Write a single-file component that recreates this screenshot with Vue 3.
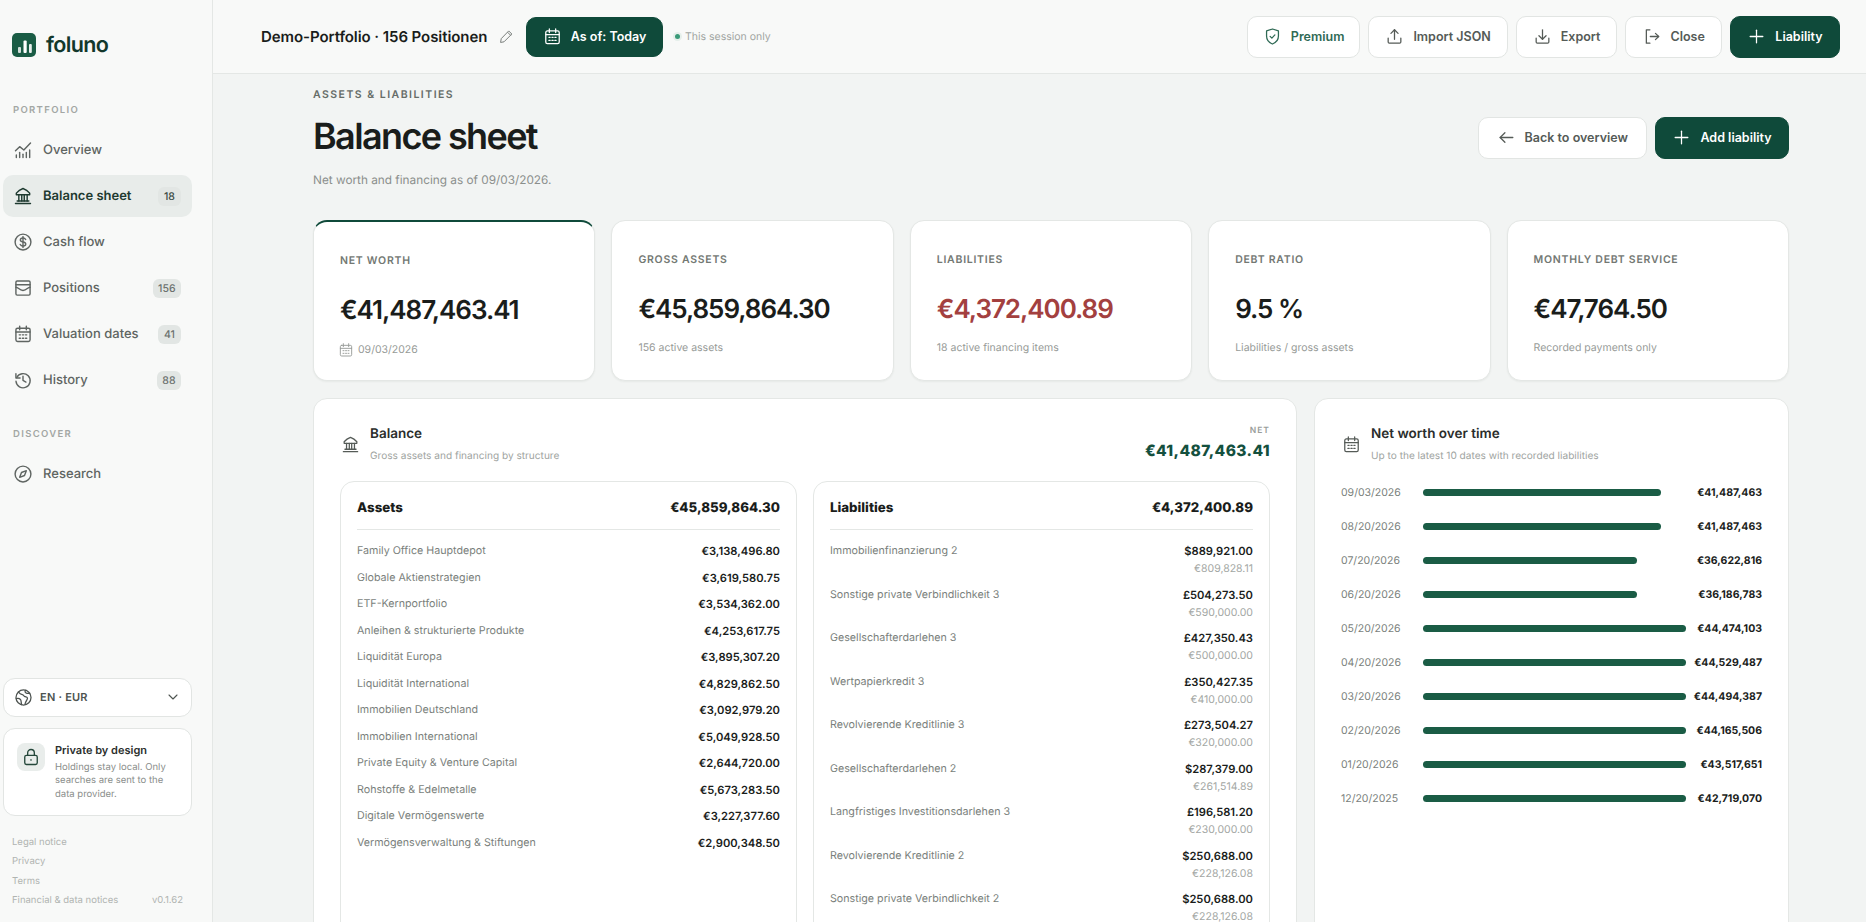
<script setup>
const icons = {
  overview: ['M4 21v-3', 'M8 21v-6', 'M12 21v-4', 'M16 21v-6', 'M20 21v-9', 'M3 13l5-5 5 4 8-8.5'],
  bank: ['M3 21h18', 'M5 18h14', 'M7 10.5V18', 'M10.5 10.5V18', 'M13.5 10.5V18', 'M17 10.5V18', 'M4 10.5h16V8.5C17.5 5.5 15 4 12 3 9 4 6.5 5.5 4 8.5z'],
  dollar: ['M21.5 12a9.5 9.5 0 1 1-19 0 9.5 9.5 0 0 1 19 0z', 'M15.2 9c-.6-1.2-1.7-1.8-3.2-1.8-1.9 0-3.2 1-3.2 2.4S10 11.7 12 12s3.3 1 3.3 2.4-1.4 2.4-3.3 2.4c-1.5 0-2.7-.6-3.3-1.8', 'M12 5.5v13'],
  tray: ['M5 3.5h14A1.5 1.5 0 0 1 20.5 5v14a1.5 1.5 0 0 1-1.5 1.5H5A1.5 1.5 0 0 1 3.5 19V5A1.5 1.5 0 0 1 5 3.5z', 'M3.5 8h17', 'M3.5 11c3 0 4 4 8.5 4s5.5-4 8.5-4'],
  calendar: ['M5.5 5h13a2 2 0 0 1 2 2v12a2 2 0 0 1-2 2h-13a2 2 0 0 1-2-2V7a2 2 0 0 1 2-2z', 'M8 2.5V7', 'M16 2.5V7', 'M3.5 9.5h17', 'M7.5 13H9', 'M11.3 13h1.5', 'M15 13h1.5', 'M7.5 17H9', 'M11.3 17h1.5', 'M15 17h1.5'],
  history: ['M4.5 9a8.5 8.5 0 1 1-.9 4.5', 'M3.5 4.5v5h5', 'M12 7.5v5l3.5 2'],
  compass: ['M21.5 12a9.5 9.5 0 1 1-19 0 9.5 9.5 0 0 1 19 0z', 'M16 8l-2.2 5.8L8 16l2.2-5.8z'],
  globe: ['M21.5 12a9.5 9.5 0 1 1-19 0 9.5 9.5 0 0 1 19 0z', 'M5.5 5c1.5 2 3 3 5 3.5s2 2 3.5 2.5 3 0 3 2-2 3-3 7', 'M2.8 13.5c2.5-1 4-.5 5.3 1 1.2 1.5.9 3.5 1.4 6.5', 'M14.5 3c-1 1.8-.5 3 1 3.5s3 .5 4.5 0'],
  lock: ['M6.5 10h11a2 2 0 0 1 2 2v7a2 2 0 0 1-2 2h-11a2 2 0 0 1-2-2v-7a2 2 0 0 1 2-2z', 'M8 10V7a4 4 0 0 1 8 0v3', 'M12 15.2v.6'],
  shield: ['M12 2.5 4.5 5v6.5c0 5 3.5 8.5 7.5 10 4-1.5 7.5-5 7.5-10V5z', 'M9 11.8l2.2 2.2 3.8-4'],
  upload: ['M12 15.5v-12', 'M7.5 8 12 3.5 16.5 8', 'M4 14v5a1.5 1.5 0 0 0 1.5 1.5h13A1.5 1.5 0 0 0 20 19v-5'],
  download: ['M12 3.5v12', 'M7.5 11l4.5 4.5 4.5-4.5', 'M4 14v5a1.5 1.5 0 0 0 1.5 1.5h13A1.5 1.5 0 0 0 20 19v-5'],
  exit: ['M10 3.5H5.5v17H10', 'M10.5 12H21', 'M17 8l4 4-4 4'],
  plus: ['M12 4v16', 'M4 12h16'],
  back: ['M20 12H4', 'M10 6l-6 6 6 6'],
  pencil: ['M16 3.5 20.5 8 8 20.5l-5.5 1 1-5.5z', 'M14 5.5 18.5 10'],
  chevron: ['M6 9l6 6 6-6']
}

const mainNav = [
  { label: 'Overview', icon: 'overview' },
  { label: 'Balance sheet', icon: 'bank', badge: 18, active: true },
  { label: 'Cash flow', icon: 'dollar' },
  { label: 'Positions', icon: 'tray', badge: 156 },
  { label: 'Valuation dates', icon: 'calendar', badge: 41 },
  { label: 'History', icon: 'history', badge: 88 }
]

const kpis = [
  { label: 'NET WORTH', value: '€41,487,463.41', sub: '09/03/2026', accent: true },
  { label: 'GROSS ASSETS', value: '€45,859,864.30', sub: '156 active assets' },
  { label: 'LIABILITIES', value: '€4,372,400.89', sub: '18 active financing items', red: true },
  { label: 'DEBT RATIO', value: '9.5 %', sub: 'Liabilities / gross assets' },
  { label: 'MONTHLY DEBT SERVICE', value: '€47,764.50', sub: 'Recorded payments only' }
]

const assets = [
  ['Family Office Hauptdepot', '€3,138,496.80'],
  ['Globale Aktienstrategien', '€3,619,580.75'],
  ['ETF-Kernportfolio', '€3,534,362.00'],
  ['Anleihen & strukturierte Produkte', '€4,253,617.75'],
  ['Liquidität Europa', '€3,895,307.20'],
  ['Liquidität International', '€4,829,862.50'],
  ['Immobilien Deutschland', '€3,092,979.20'],
  ['Immobilien International', '€5,049,928.50'],
  ['Private Equity & Venture Capital', '€2,644,720.00'],
  ['Rohstoffe & Edelmetalle', '€5,673,283.50'],
  ['Digitale Vermögenswerte', '€3,227,377.60'],
  ['Vermögensverwaltung & Stiftungen', '€2,900,348.50']
]

const liabilities = [
  ['Immobilienfinanzierung 2', '$889,921.00', '€809,828.11'],
  ['Sonstige private Verbindlichkeit 3', '£504,273.50', '€590,000.00'],
  ['Gesellschafterdarlehen 3', '£427,350.43', '€500,000.00'],
  ['Wertpapierkredit 3', '£350,427.35', '€410,000.00'],
  ['Revolvierende Kreditlinie 3', '£273,504.27', '€320,000.00'],
  ['Gesellschafterdarlehen 2', '$287,379.00', '€261,514.89'],
  ['Langfristiges Investitionsdarlehen 3', '£196,581.20', '€230,000.00'],
  ['Revolvierende Kreditlinie 2', '$250,688.00', '€228,126.08'],
  ['Sonstige private Verbindlichkeit 2', '$250,688.00', '€228,126.08']
]

const history = [
  ['09/03/2026', 90.5, '€41,487,463'],
  ['08/20/2026', 90.5, '€41,487,463'],
  ['07/20/2026', 81.3, '€36,622,816'],
  ['06/20/2026', 81.3, '€36,186,783'],
  ['05/20/2026', 100, '€44,474,103'],
  ['04/20/2026', 100, '€44,529,487'],
  ['03/20/2026', 100, '€44,494,387'],
  ['02/20/2026', 100, '€44,165,506'],
  ['01/20/2026', 100, '€43,517,651'],
  ['12/20/2025', 100, '€42,719,070']
]
</script>

<template>
  <div class="app">
    <aside class="sidebar">
      <div class="brand">
        <svg class="brand-mark" viewBox="0 0 24 24">
          <rect width="24" height="24" rx="5" fill="#1a5c45" />
          <rect x="6" y="14" width="3" height="6" rx="1" fill="#fff" opacity=".8" />
          <rect x="11.5" y="7.5" width="3.2" height="12.5" rx="1" fill="#fff" />
          <rect x="17" y="11" width="2.8" height="9" rx="1" fill="#fff" opacity=".9" />
        </svg>
        <span>foluno</span>
      </div>

      <div class="side-label first">PORTFOLIO</div>
      <nav class="nav">
        <a v-for="item in mainNav" :key="item.label" class="nav-item" :class="{ active: item.active }">
          <svg class="ico nav-ico" viewBox="0 0 24 24"><path v-for="d in icons[item.icon]" :key="d" :d="d" /></svg>
          <span class="nav-text">{{ item.label }}</span>
          <span v-if="item.badge" class="badge">{{ item.badge }}</span>
        </a>
      </nav>

      <div class="side-label second">DISCOVER</div>
      <nav class="nav">
        <a class="nav-item">
          <svg class="ico nav-ico" viewBox="0 0 24 24"><path v-for="d in icons.compass" :key="d" :d="d" /></svg>
          <span class="nav-text">Research</span>
        </a>
      </nav>

      <div class="side-bottom">
        <div class="lang">
          <svg class="ico lang-ico" viewBox="0 0 24 24"><path v-for="d in icons.globe" :key="d" :d="d" /></svg>
          <span class="lang-text">EN · EUR</span>
          <svg class="ico chev" viewBox="0 0 24 24"><path v-for="d in icons.chevron" :key="d" :d="d" /></svg>
        </div>
        <div class="privacy">
          <div class="privacy-ico">
            <svg class="ico" viewBox="0 0 24 24"><path v-for="d in icons.lock" :key="d" :d="d" /></svg>
          </div>
          <div>
            <div class="privacy-title">Private by design</div>
            <p class="privacy-text">Holdings stay local. Only searches are sent to the data provider.</p>
          </div>
        </div>
        <div class="legal">
          <a>Legal notice</a>
          <a>Privacy</a>
          <a>Terms</a>
          <div class="legal-last">
            <a>Financial &amp; data notices</a>
            <span>v0.1.62</span>
          </div>
        </div>
      </div>
    </aside>

    <div class="content">
      <header class="topbar">
        <div class="top-left">
          <span class="portfolio-name">Demo-Portfolio · 156 Positionen</span>
          <svg class="ico pencil" viewBox="0 0 24 24"><path v-for="d in icons.pencil" :key="d" :d="d" /></svg>
          <button class="btn primary as-of">
            <svg class="ico" viewBox="0 0 24 24"><path v-for="d in icons.calendar" :key="d" :d="d" /></svg>
            As of: Today
          </button>
          <span class="session"><i class="dot"></i>This session only</span>
        </div>
        <div class="top-right">
          <button class="btn premium">
            <svg class="ico" viewBox="0 0 24 24"><path v-for="d in icons.shield" :key="d" :d="d" /></svg>
            Premium
          </button>
          <button class="btn">
            <svg class="ico" viewBox="0 0 24 24"><path v-for="d in icons.upload" :key="d" :d="d" /></svg>
            Import JSON
          </button>
          <button class="btn">
            <svg class="ico" viewBox="0 0 24 24"><path v-for="d in icons.download" :key="d" :d="d" /></svg>
            Export
          </button>
          <button class="btn">
            <svg class="ico" viewBox="0 0 24 24"><path v-for="d in icons.exit" :key="d" :d="d" /></svg>
            Close
          </button>
          <button class="btn primary wide">
            <svg class="ico" viewBox="0 0 24 24"><path v-for="d in icons.plus" :key="d" :d="d" /></svg>
            Liability
          </button>
        </div>
      </header>

      <main class="page">
        <div class="page-head">
          <div>
            <div class="eyebrow">ASSETS &amp; LIABILITIES</div>
            <h1>Balance sheet</h1>
            <p class="lead">Net worth and financing as of 09/03/2026.</p>
          </div>
          <div class="head-actions">
            <button class="btn back">
              <svg class="ico" viewBox="0 0 24 24"><path v-for="d in icons.back" :key="d" :d="d" /></svg>
              Back to overview
            </button>
            <button class="btn primary wide">
              <svg class="ico" viewBox="0 0 24 24"><path v-for="d in icons.plus" :key="d" :d="d" /></svg>
              Add liability
            </button>
          </div>
        </div>

        <section class="kpis">
          <div v-for="k in kpis" :key="k.label" class="kpi" :class="{ accent: k.accent }">
            <div class="kpi-label">{{ k.label }}</div>
            <div class="kpi-value" :class="{ red: k.red }">{{ k.value }}</div>
            <div class="kpi-sub">
              <svg v-if="k.accent" class="ico" viewBox="0 0 24 24"><path v-for="d in icons.calendar" :key="d" :d="d" /></svg>
              {{ k.sub }}
            </div>
          </div>
        </section>

        <section class="panels">
          <div class="panel">
            <div class="panel-head">
              <svg class="ico panel-ico" viewBox="0 0 24 24"><path v-for="d in icons.bank" :key="d" :d="d" /></svg>
              <div class="panel-titles">
                <h2>Balance</h2>
                <p>Gross assets and financing by structure</p>
              </div>
              <div class="net">
                <div class="net-label">NET</div>
                <div class="net-value">€41,487,463.41</div>
              </div>
            </div>
            <div class="columns">
              <div class="sheet">
                <div class="sheet-head"><span>Assets</span><span>€45,859,864.30</span></div>
                <div v-for="row in assets" :key="row[0]" class="row">
                  <span class="row-name">{{ row[0] }}</span>
                  <span class="row-amount">{{ row[1] }}</span>
                </div>
              </div>
              <div class="sheet">
                <div class="sheet-head"><span>Liabilities</span><span>€4,372,400.89</span></div>
                <div v-for="row in liabilities" :key="row[0]" class="row debt">
                  <span class="row-name">{{ row[0] }}</span>
                  <span class="row-values">
                    <span class="row-amount">{{ row[1] }}</span>
                    <span class="row-base">{{ row[2] }}</span>
                  </span>
                </div>
              </div>
            </div>
          </div>

          <div class="panel">
            <div class="panel-head">
              <svg class="ico panel-ico" viewBox="0 0 24 24"><path v-for="d in icons.calendar" :key="d" :d="d" /></svg>
              <div class="panel-titles">
                <h2>Net worth over time</h2>
                <p>Up to the latest 10 dates with recorded liabilities</p>
              </div>
            </div>
            <div class="timeline">
              <div v-for="row in history" :key="row[0]" class="time-row">
                <span class="time-date">{{ row[0] }}</span>
                <span class="time-track"><span class="time-bar" :style="{ width: row[1] + '%' }"></span></span>
                <span class="time-value">{{ row[2] }}</span>
              </div>
            </div>
          </div>
        </section>
      </main>
    </div>
  </div>
</template>

<style scoped>
.app {
  display: flex;
  height: 922px;
  overflow: hidden;
  background: #f2f4f3;
  color: #1a1d1b;
  font-family: "Inter", "Liberation Sans", sans-serif;
  text-rendering: geometricPrecision;
}

.ico {
  width: 19px;
  height: 19px;
  flex: none;
  fill: none;
  stroke: currentColor;
  stroke-width: 1.6;
  stroke-linecap: round;
  stroke-linejoin: round;
}

.sidebar {
  width: 213px;
  flex: none;
  box-sizing: border-box;
  padding: 33px 20px 15px 3px;
  display: flex;
  flex-direction: column;
  background: #f8f9f8;
  border-right: 1px solid #e4e7e5;
}

.brand {
  display: flex;
  align-items: center;
  gap: 10px;
  height: 24px;
  padding-left: 9px;
  color: #12382c;
  font-size: 21.5px;
  font-weight: 600;
  letter-spacing: -0.03em;
}

.brand-mark {
  width: 24px;
  height: 24px;
}

.side-label {
  height: 14px;
  line-height: 14px;
  padding-left: 10px;
  color: #a3a7a4;
  font-size: 9.5px;
  font-weight: 600;
  letter-spacing: 0.14em;
}

.side-label.first {
  margin-top: 47px;
  margin-bottom: 11px;
}

.side-label.second {
  margin-top: 27px;
  margin-bottom: 11px;
}

.nav {
  display: flex;
  flex-direction: column;
  gap: 4px;
}

.nav-item {
  display: flex;
  align-items: center;
  height: 42px;
  padding: 0 11px 0 9.5px;
  border-radius: 10px;
  color: #5f6562;
  font-size: 13px;
  font-weight: 500;
}

.nav-ico {
  width: 20px;
  height: 20px;
  margin-right: 10.5px;
  stroke-width: 1.7;
}

.nav-text {
  flex: 1;
}

.nav-item.active {
  background: #e8ecea;
  color: #1e3a30;
  font-weight: 600;
}

.badge {
  min-width: 12px;
  padding: 2px 5.5px;
  border-radius: 6px;
  background: #e2e6e4;
  color: #6b716e;
  font-size: 10.5px;
  font-weight: 500;
  line-height: 15px;
  text-align: center;
}

.nav-item.active .badge {
  color: #3a4a43;
}

.side-bottom {
  margin-top: auto;
}

.lang {
  display: flex;
  align-items: center;
  height: 39px;
  box-sizing: border-box;
  padding: 0 10px;
  background: #fff;
  border: 1px solid #e2e5e3;
  border-radius: 12px;
  color: #4d5350;
}

.lang-ico {
  margin-right: 7px;
}

.lang-text {
  flex: 1;
  font-size: 11px;
  font-weight: 600;
  letter-spacing: 0.02em;
}

.chev {
  width: 16px;
  height: 16px;
}

.privacy {
  display: flex;
  gap: 10px;
  height: 88px;
  box-sizing: border-box;
  margin-top: 11px;
  padding: 14px 10px 0 13px;
  background: #fff;
  border: 1px solid #e2e5e3;
  border-radius: 12px;
}

.privacy-ico {
  display: flex;
  align-items: center;
  justify-content: center;
  width: 28px;
  height: 28px;
  flex: none;
  border-radius: 8px;
  background: #e9edeb;
  color: #24473a;
}

.privacy-ico .ico {
  width: 20px;
  height: 20px;
}

.privacy-title {
  color: #2b2f2d;
  font-size: 11px;
  font-weight: 600;
  line-height: 14px;
}

.privacy-text {
  margin: 4px 0 0;
  color: #8a8e8b;
  font-size: 9.5px;
  line-height: 13.5px;
}

.legal {
  display: flex;
  flex-direction: column;
  gap: 7.5px;
  margin-top: 21px;
  padding-left: 9px;
  color: #b0b4b1;
  font-size: 9.5px;
  line-height: 12px;
}

.legal-last {
  display: flex;
  justify-content: space-between;
  margin-right: 9px;
}

.content {
  flex: 1;
  min-width: 0;
  display: flex;
  flex-direction: column;
}

.topbar {
  display: flex;
  align-items: center;
  justify-content: space-between;
  height: 74px;
  flex: none;
  box-sizing: border-box;
  padding: 0 26px 0 48px;
  background: #f8f9f8;
  border-bottom: 1px solid #e4e7e5;
}

.top-left,
.top-right {
  display: flex;
  align-items: center;
}

.top-right {
  gap: 8px;
}

.portfolio-name {
  font-size: 15px;
  font-weight: 600;
  letter-spacing: -0.005em;
}

.pencil {
  width: 15px;
  height: 15px;
  margin: 0 12px 0 12px;
  color: #7b807d;
}

.btn {
  display: inline-flex;
  align-items: center;
  gap: 9px;
  height: 42px;
  padding: 0 16px;
  box-sizing: border-box;
  background: #fff;
  border: 1px solid #e2e5e3;
  border-radius: 10px;
  color: #555b57;
  font: 600 12.5px "Inter", "Liberation Sans", sans-serif;
  white-space: nowrap;
}

.btn.primary {
  background: #0f4a3a;
  border-color: #0f4a3a;
  color: #fff;
}

.btn.wide {
  padding: 0 16.5px;
}

.btn.premium {
  padding: 0 15px;
  color: #2f6a55;
}

.btn.back {
  padding: 0 18px;
}

.btn.as-of {
  height: 40px;
  padding: 0 15.5px;
}

.session {
  display: inline-flex;
  align-items: center;
  margin-left: 12px;
  color: #a1a5a2;
  font-size: 10.5px;
}

.dot {
  width: 5px;
  height: 5px;
  margin-right: 5px;
  border-radius: 50%;
  background: #3a9a78;
  box-shadow: 0 0 0 2px #e5efea;
}

.page {
  flex: 1;
  min-height: 0;
  overflow: hidden;
  padding: 14px 77px 0 100px;
}

.page-head {
  display: flex;
  align-items: center;
  justify-content: space-between;
}

.eyebrow {
  color: #666c68;
  font-size: 10.5px;
  font-weight: 600;
  letter-spacing: 0.14em;
  line-height: 14px;
}

h1 {
  margin: 11px 0 0;
  font-size: 36px;
  font-weight: 600;
  letter-spacing: -0.045em;
  line-height: 46px;
}

.lead {
  margin: 14px 0 0;
  color: #8b8f8c;
  font-size: 11.8px;
  line-height: 14px;
}

.head-actions {
  display: flex;
  gap: 8px;
}

.kpis {
  display: grid;
  grid-template-columns: repeat(5, minmax(0, 1fr));
  gap: 16px;
  margin-top: 33px;
}

.kpi {
  height: 161px;
  box-sizing: border-box;
  padding: 32px 26px 0;
  background: #fff;
  border: 1px solid #e4e7e5;
  border-radius: 14px;
  box-shadow: 0 1px 2px rgba(20, 30, 25, 0.05);
}

.kpi.accent {
  border-top: 2px solid #0f4a3a;
}

.kpi-label {
  color: #737873;
  font-size: 10.5px;
  font-weight: 600;
  letter-spacing: 0.07em;
  line-height: 14px;
}

.kpi-value {
  margin-top: 25px;
  font-size: 26px;
  font-weight: 600;
  letter-spacing: -0.04em;
  line-height: 36px;
}

.kpi-value.red {
  color: #a3403f;
}

.kpi-sub {
  display: flex;
  align-items: center;
  gap: 4px;
  margin-top: 13px;
  color: #979b98;
  font-size: 10.5px;
  line-height: 14px;
}

.kpi-sub .ico {
  width: 16px;
  height: 16px;
  margin-left: -2px;
  stroke-width: 1.4;
}

.panels {
  display: grid;
  grid-template-columns: minmax(0, 1fr) 475px;
  gap: 17px;
  margin-top: 17px;
  align-items: stretch;
}

.panel {
  box-sizing: border-box;
  padding: 21px 26px 30px;
  background: #fff;
  border: 1px solid #e4e7e5;
  border-radius: 14px;
}

.panel-head {
  display: flex;
  align-items: center;
  min-height: 48px;
  padding-left: 1px;
}

.panel-ico {
  margin-right: 10px;
  color: #555b57;
}

.panel-titles {
  flex: 1;
}

h2 {
  margin: 0;
  color: #2a2d2b;
  font-size: 13.5px;
  font-weight: 600;
  line-height: 18px;
}

.panel-titles p {
  margin: 6px 0 0;
  color: #a0a4a1;
  font-size: 10.1px;
  line-height: 14px;
}

.net {
  margin-bottom: 2px;
  text-align: right;
}

.net-label {
  color: #999d9a;
  font-size: 8.5px;
  font-weight: 600;
  letter-spacing: 0.12em;
  line-height: 12px;
}

.net-value {
  margin-top: 4px;
  color: #14503e;
  font-size: 15.5px;
  font-weight: 800;
  letter-spacing: 0.025em;
  line-height: 20px;
}

.columns {
  display: grid;
  grid-template-columns: repeat(2, minmax(0, 1fr));
  gap: 16px;
  margin-top: 13px;
}

.sheet {
  padding: 0 16px 20px;
  border: 1px solid #e4e7e5;
  border-radius: 14px;
}

.sheet-head {
  display: flex;
  justify-content: space-between;
  align-items: center;
  height: 48px;
  box-sizing: border-box;
  padding-top: 4px;
  margin-bottom: 8px;
  border-bottom: 1px solid #e4e7e5;
  font-size: 13.3px;
  font-weight: 800;
}

.row {
  display: flex;
  justify-content: space-between;
  height: 26.5px;
  line-height: 26.5px;
}

.row-name {
  color: #7a7f7c;
  font-size: 10.7px;
}

.row-amount {
  color: #1a1d1b;
  font-size: 11.2px;
  font-weight: 600;
}

.row.debt {
  height: 43.5px;
}

.row-values {
  display: flex;
  flex-direction: column;
  align-items: flex-end;
}

.row-values .row-amount {
  line-height: 26px;
}

.row-base {
  margin-top: -2px;
  color: #a3a7a4;
  font-size: 10.5px;
  line-height: 14px;
}

.timeline {
  margin-top: 7px;
}

.time-row {
  display: grid;
  grid-template-columns: 72px minmax(0, 1fr) 66px;
  gap: 10px;
  align-items: center;
  height: 34.1px;
}

.time-date {
  color: #7a7f7c;
  font-size: 10.5px;
}

.time-track {
  display: block;
  height: 7px;
}

.time-bar {
  display: block;
  height: 7px;
  border-radius: 4px;
  background: #1a5c45;
}

.time-value {
  font-size: 10.5px;
  font-weight: 700;
  text-align: right;
  white-space: nowrap;
  justify-self: end;
}
</style>

<style>
html,
body {
  margin: 0;
  background: #f2f4f3;
}
</style>
